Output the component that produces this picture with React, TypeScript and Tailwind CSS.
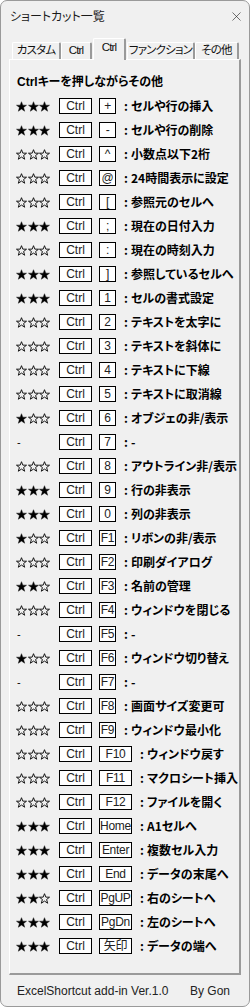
import { X } from 'lucide-react'

type Row = { stars: string; key: string; desc: string; wide?: boolean }

const rows: Row[] = [
  { stars: '★★★', key: '+', desc: 'セルや行の挿入' },
  { stars: '★★★', key: '-', desc: 'セルや行の削除' },
  { stars: '☆☆☆', key: '^', desc: '小数点以下2桁' },
  { stars: '☆☆☆', key: '@', desc: '24時間表示に設定' },
  { stars: '☆☆☆', key: '[', desc: '参照元のセルへ' },
  { stars: '★★★', key: ';', desc: '現在の日付入力' },
  { stars: '☆☆☆', key: ':', desc: '現在の時刻入力' },
  { stars: '★★★', key: ']', desc: '参照しているセルへ' },
  { stars: '★★★', key: '1', desc: 'セルの書式設定' },
  { stars: '☆☆☆', key: '2', desc: 'テキストを太字に' },
  { stars: '☆☆☆', key: '3', desc: 'テキストを斜体に' },
  { stars: '☆☆☆', key: '4', desc: 'テキストに下線' },
  { stars: '☆☆☆', key: '5', desc: 'テキストに取消線' },
  { stars: '★☆☆', key: '6', desc: 'オブジェの非/表示' },
  { stars: '-', key: '7', desc: '-' },
  { stars: '☆☆☆', key: '8', desc: 'アウトライン非/表示' },
  { stars: '★★★', key: '9', desc: '行の非表示' },
  { stars: '★★★', key: '0', desc: '列の非表示' },
  { stars: '★☆☆', key: 'F1', desc: 'リボンの非/表示' },
  { stars: '☆☆☆', key: 'F2', desc: '印刷ダイアログ' },
  { stars: '★★☆', key: 'F3', desc: '名前の管理' },
  { stars: '☆☆☆', key: 'F4', desc: 'ウィンドウを閉じる' },
  { stars: '-', key: 'F5', desc: '-' },
  { stars: '★☆☆', key: 'F6', desc: 'ウィンドウ切り替え' },
  { stars: '-', key: 'F7', desc: '-' },
  { stars: '☆☆☆', key: 'F8', desc: '画面サイズ変更可' },
  { stars: '☆☆☆', key: 'F9', desc: 'ウィンドウ最小化' },
  { stars: '☆☆☆', key: 'F10', desc: 'ウィンドウ戻す', wide: true },
  { stars: '☆☆☆', key: 'F11', desc: 'マクロシート挿入', wide: true },
  { stars: '☆☆☆', key: 'F12', desc: 'ファイルを開く', wide: true },
  { stars: '★★★', key: 'Home', desc: 'A1セルへ', wide: true },
  { stars: '★★★', key: 'Enter', desc: '複数セル入力', wide: true },
  { stars: '★★★', key: 'End', desc: 'データの末尾へ', wide: true },
  { stars: '★★☆', key: 'PgUP', desc: '右のシートへ', wide: true },
  { stars: '★★★', key: 'PgDn', desc: '左のシートへ', wide: true },
  { stars: '★★★', key: '矢印', desc: 'データの端へ', wide: true },
]

const tabs = [
  { label: 'カスタム', w: 'w-[49px]' },
  { label: 'Ctrl', w: 'w-[31px]' },
  { label: 'Ctrl', w: 'w-[33px]', active: true },
  { label: 'ファンクション', w: 'w-[68px]' },
  { label: 'その他', w: 'w-[44px]' },
]

const font = "font-['Liberation_Sans','Noto_Sans_CJK_JP',sans-serif]"

function Star({ filled }: { filled: boolean }) {
  return (
    <svg width="11" height="11" viewBox="0 0 24 24" className="shrink-0">
      <polygon
        points="12,1.5 14.9,9 23,9.2 16.6,14.2 18.9,22.3 12,17.6 5.1,22.3 7.4,14.2 1,9.2 9.1,9"
        fill={filled ? '#000' : 'none'}
        stroke="#111"
        strokeWidth={filled ? 1 : 2.1}
        strokeLinejoin="miter"
      />
    </svg>
  )
}

function Stars({ value }: { value: string }) {
  if (value === '-') return <span className="text-[11px] leading-none pl-[1px]">-</span>
  return (
    <div className="flex gap-[0.5px]">
      {value.split('').map((c, i) => (
        <Star key={i} filled={c === '★'} />
      ))}
    </div>
  )
}

function KeyBox({ label, wide }: { label: string; wide?: boolean }) {
  return (
    <div
      className={`h-[16px] shrink-0 ${wide ? 'w-[33px]' : 'w-[17px]'} border border-black bg-white flex items-center justify-center text-[12px] leading-none text-[#222] whitespace-nowrap tracking-[-0.3px] [font-feature-settings:'palt']`}
    >
      {label}
    </div>
  )
}

export default function App() {
  return (
    <div className={`w-[250px] h-[1007px] bg-[#f0f0f0] border border-[#9a9a9a] rounded-[7px] overflow-hidden flex flex-col text-black ${font}`}>
      {/* Title bar */}
      <div className="h-[30px] shrink-0 flex items-center justify-between pl-[9px] pr-[5px]">
        <span className="text-[12px] font-['Noto_Sans_CJK_JP',sans-serif] text-[#1a1a1a] [font-feature-settings:'palt']">ショートカット一覧</span>
        <X size={15} strokeWidth={1} className="text-[#222]" />
      </div>

      {/* Tabs */}
      <div className="h-[28px] shrink-0 flex items-end pl-[11px] relative z-10">
        {tabs.map((t, i) => (
          <div
            key={i}
            className={`${t.w} shrink-0 flex items-center justify-center whitespace-nowrap text-[11.5px] tracking-[-0.8px] [font-feature-settings:'palt'] text-[#111] border-t border-l border-white border-r-2 border-r-[#9a9a9a] rounded-t-[2px] ${
              t.active
                ? 'h-[22px] bg-[#f0f0f0] -mb-px pb-[3px] mx-[1px]'
                : 'h-[17px] mt-auto'
            }`}
          >
            {t.label}
          </div>
        ))}
      </div>

      {/* Panel */}
      <div className="mx-[8px] h-[916px] shrink-0 border-t border-l border-white border-r-2 border-b-2 border-r-[#9a9a9a] border-b-[#9a9a9a] pt-[10px] pl-[6px] flex flex-col overflow-hidden">
        <div className="h-[24px] flex items-center pl-[1px] text-[12px] font-bold [font-feature-settings:'palt']">
          Ctrlキーを押しながらその他
        </div>
        {rows.map((r, i) => (
          <div key={i} className="h-[24px] flex items-center">
            <div className="w-[43px] shrink-0 flex items-center">
              <Stars value={r.stars} />
            </div>
            <div className="h-[16px] w-[33px] shrink-0 border border-black bg-white flex items-center justify-center text-[12px] leading-none text-[#222]">
              Ctrl
            </div>
            <div className="ml-[7px] shrink-0">
              <KeyBox label={r.key} wide={r.wide} />
            </div>
            <div className="ml-[8px] shrink-0 flex items-center text-[12px] font-bold font-['Noto_Sans_CJK_JP',sans-serif] whitespace-nowrap [font-feature-settings:'palt']">
              <span className="w-[7px]">:</span>
              <span>{r.desc}</span>
            </div>
          </div>
        ))}
      </div>

      {/* Footer */}
      <div className="flex-1 flex items-center justify-between pl-[16px] pr-[19px] text-[12px] text-[#222]">
        <span>ExcelShortcut add-in Ver.1.0</span>
        <span>By Gon</span>
      </div>
    </div>
  )
}
